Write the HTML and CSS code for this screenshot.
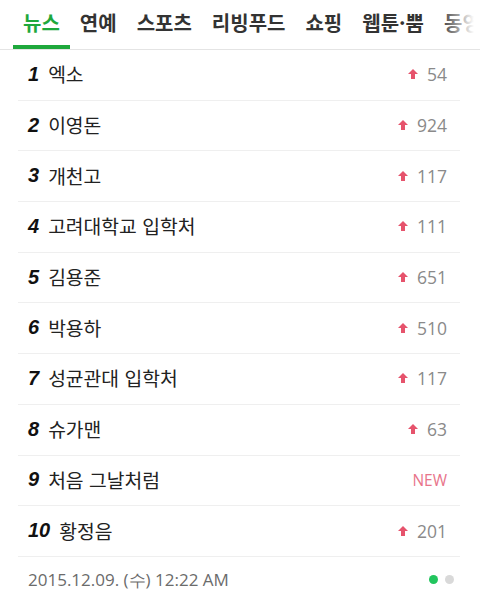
FILE: index.html
```html
<!DOCTYPE html>
<html lang="ko">
<head>
    <meta charset="UTF-8">
    <meta name="viewport" content="width=device-width, initial-scale=1.0">
    <title>실시간 급상승 검색어</title>
    <link rel="stylesheet" href="styles.css">
</head>
<body>
    <div class="tabs">
        <div class="tab active">뉴스</div>
        <div class="tab">연예</div>
        <div class="tab">스포츠</div>
        <div class="tab">리빙푸드</div>
        <div class="tab">쇼핑</div>
        <div class="tab">웹툰·뿜</div>
        <div class="tab">동영상</div>
        <div class="fade"></div>
    </div>

    <ul class="rank-list">
        <li class="rank-item"><span class="num">1</span><span class="name">엑소</span><span class="change"><span class="up"></span>54</span></li>
        <li class="rank-item"><span class="num">2</span><span class="name">이영돈</span><span class="change"><span class="up"></span>924</span></li>
        <li class="rank-item"><span class="num">3</span><span class="name">개천고</span><span class="change"><span class="up"></span>117</span></li>
        <li class="rank-item"><span class="num">4</span><span class="name">고려대학교 입학처</span><span class="change"><span class="up"></span>111</span></li>
        <li class="rank-item"><span class="num">5</span><span class="name">김용준</span><span class="change"><span class="up"></span>651</span></li>
        <li class="rank-item"><span class="num">6</span><span class="name">박용하</span><span class="change"><span class="up"></span>510</span></li>
        <li class="rank-item"><span class="num">7</span><span class="name">성균관대 입학처</span><span class="change"><span class="up"></span>117</span></li>
        <li class="rank-item"><span class="num">8</span><span class="name">슈가맨</span><span class="change"><span class="up"></span>63</span></li>
        <li class="rank-item"><span class="num">9</span><span class="name">처음 그날처럼</span><span class="change new">NEW</span></li>
        <li class="rank-item"><span class="num">10</span><span class="name">황정음</span><span class="change"><span class="up"></span>201</span></li>
    </ul>

    <div class="footer">
        <span class="date">2015.12.09. (수) 12:22 AM</span>
        <div class="dots">
            <span class="dot on"></span>
            <span class="dot"></span>
        </div>
    </div>
</body>
</html>
```

FILE: styles.css
```css
body {
    margin: 0;
    padding: 0;
    background-color: #fff;
    font-family: "Noto Sans CJK KR", "Noto Sans", sans-serif;
    width: 480px;
    height: 601px;
    overflow: hidden;
}

.tabs {
    position: relative;
    display: flex;
    height: 50px;
    padding-left: 13px;
    border-bottom: 1px solid #e4e4e4;
    box-sizing: border-box;
    overflow: hidden;
    white-space: nowrap;
}

.tab {
    flex-shrink: 0;
    padding: 0 10px;
    font-size: 20px;
    font-weight: bold;
    line-height: 45px;
    color: #333;
    border-bottom: 4px solid transparent;
}

.tab.active {
    color: #1ea83c;
    border-bottom-color: #1ea83c;
}

.fade {
    position: absolute;
    top: 0;
    right: 0;
    width: 40px;
    height: 48px;
    background: linear-gradient(to right, rgba(255, 255, 255, 0), #fff 85%);
}

.rank-list {
    list-style: none;
    margin: 0 20px 0 18px;
    padding: 0;
}

.rank-item {
    display: flex;
    align-items: center;
    height: 50.7px;
    border-bottom: 1px solid #efefef;
    box-sizing: border-box;
    padding: 0 13px 1px 10px;
}

.num {
    font-family: "Liberation Sans", Arial, sans-serif;
    font-weight: bold;
    font-style: italic;
    font-size: 20px;
    color: #111;
    margin-right: 9px;
}

.name {
    flex: 1;
    font-size: 19.3px;
    color: #222;
}

.change {
    display: flex;
    align-items: center;
    font-family: "Open Sans", sans-serif;
    font-size: 17.5px;
    color: #8a8a8a;
}

.change .up {
    position: relative;
    width: 10px;
    height: 10px;
    margin-right: 9px;
}

.change .up::before {
    content: "";
    position: absolute;
    left: 0;
    top: 0;
    border-left: 5px solid transparent;
    border-right: 5px solid transparent;
    border-bottom: 5px solid #e6536c;
}

.change .up::after {
    content: "";
    position: absolute;
    left: 3px;
    top: 5px;
    width: 4px;
    height: 5px;
    background-color: #e6536c;
}

.change.new {
    color: #e8748a;
    font-size: 15.5px;
}

.footer {
    display: flex;
    align-items: center;
    justify-content: space-between;
    height: 46px;
    padding: 0 26px 0 28px;
}

.date {
    font-family: "Open Sans", sans-serif;
    font-size: 17px;
    color: #6b6b6b;
}

.dots {
    display: flex;
    gap: 7px;
}

.dot {
    width: 9px;
    height: 9px;
    border-radius: 50%;
    background-color: #d9d9d9;
}

.dot.on {
    background-color: #22c55e;
}
```
